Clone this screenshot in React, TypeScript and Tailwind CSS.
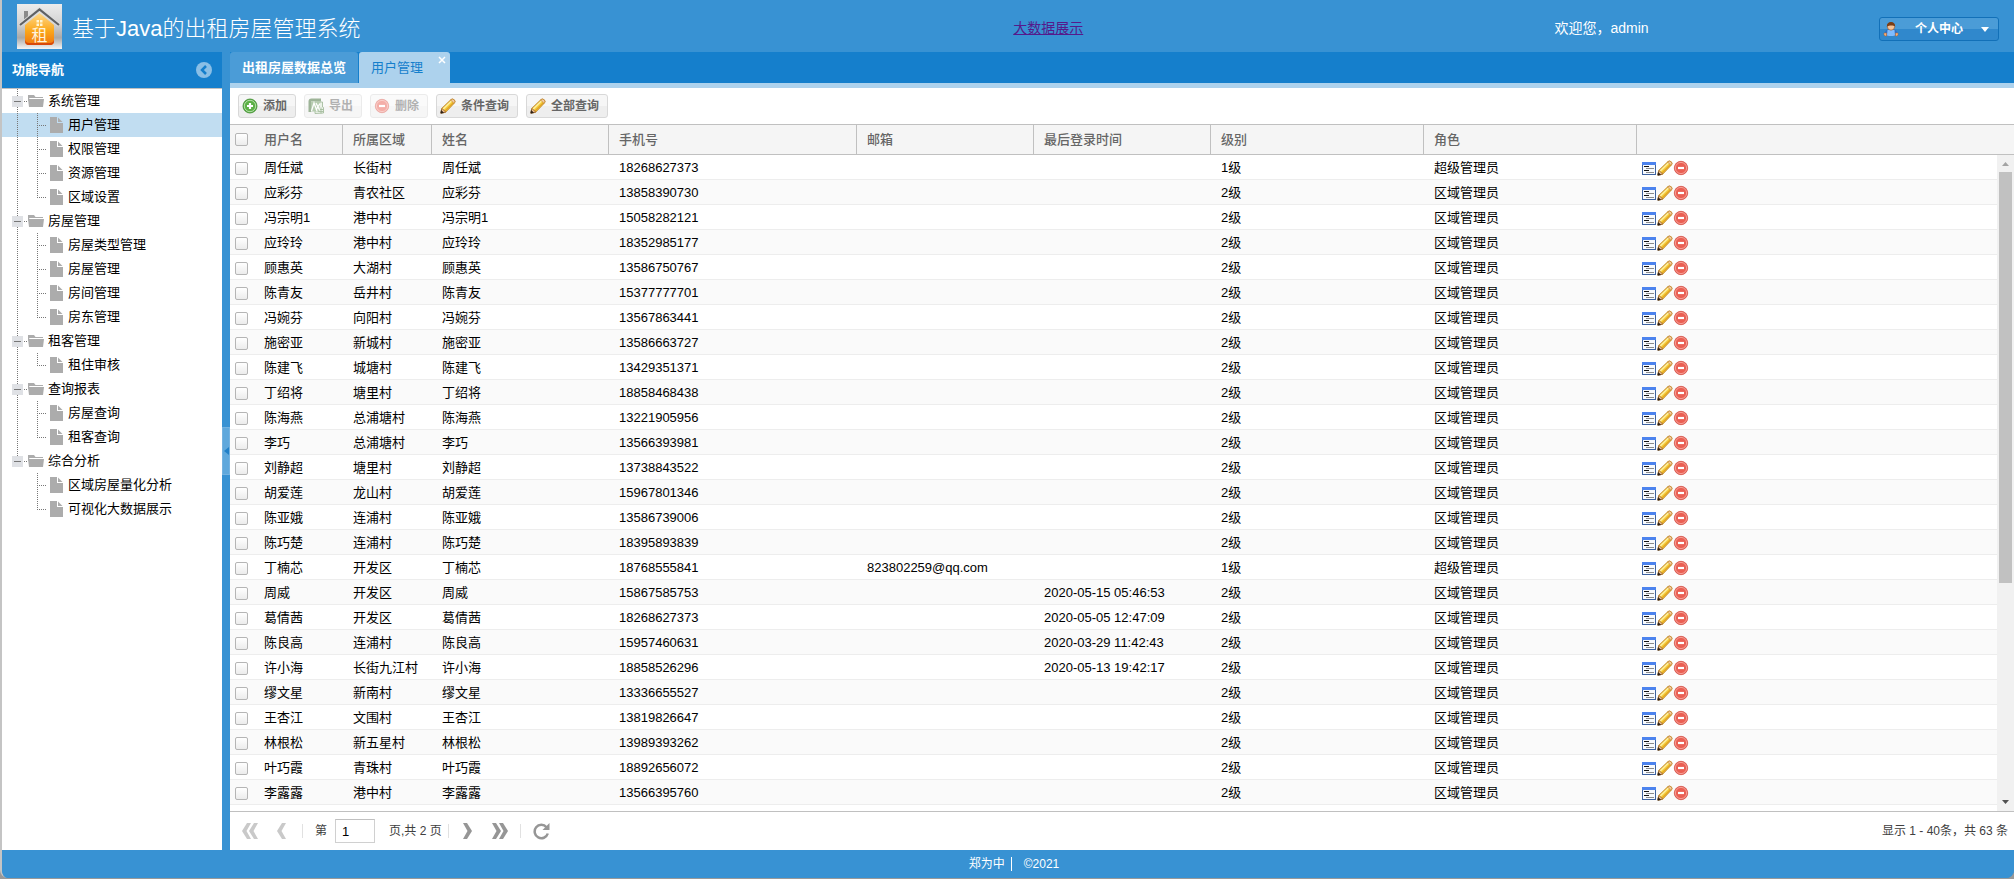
import type { ReactNode } from 'react';

type User = {
  name: string;
  area: string;
  phone: string;
  email?: string;
  lastLogin?: string;
  top?: boolean;
};

const menu = [
  { title: '系统管理', items: ['用户管理', '权限管理', '资源管理', '区域设置'] },
  { title: '房屋管理', items: ['房屋类型管理', '房屋管理', '房间管理', '房东管理'] },
  { title: '租客管理', items: ['租住审核'] },
  { title: '查询报表', items: ['房屋查询', '租客查询'] },
  { title: '综合分析', items: ['区域房屋量化分析', '可视化大数据展示'] },
];

const users: User[] = [
  { name: '周任斌', area: '长街村', phone: '18268627373', top: true },
  { name: '应彩芬', area: '青农社区', phone: '13858390730' },
  { name: '冯宗明1', area: '港中村', phone: '15058282121' },
  { name: '应玲玲', area: '港中村', phone: '18352985177' },
  { name: '顾惠英', area: '大湖村', phone: '13586750767' },
  { name: '陈青友', area: '岳井村', phone: '15377777701' },
  { name: '冯婉芬', area: '向阳村', phone: '13567863441' },
  { name: '施密亚', area: '新城村', phone: '13586663727' },
  { name: '陈建飞', area: '城塘村', phone: '13429351371' },
  { name: '丁绍将', area: '塘里村', phone: '18858468438' },
  { name: '陈海燕', area: '总浦塘村', phone: '13221905956' },
  { name: '李巧', area: '总浦塘村', phone: '13566393981' },
  { name: '刘静超', area: '塘里村', phone: '13738843522' },
  { name: '胡爱莲', area: '龙山村', phone: '15967801346' },
  { name: '陈亚娥', area: '连浦村', phone: '13586739006' },
  { name: '陈巧楚', area: '连浦村', phone: '18395893839' },
  { name: '丁楠芯', area: '开发区', phone: '18768555841', email: '823802259@qq.com', top: true },
  { name: '周威', area: '开发区', phone: '15867585753', lastLogin: '2020-05-15 05:46:53' },
  { name: '葛倩茜', area: '开发区', phone: '18268627373', lastLogin: '2020-05-05 12:47:09' },
  { name: '陈良高', area: '连浦村', phone: '15957460631', lastLogin: '2020-03-29 11:42:43' },
  { name: '许小海', area: '长街九江村', phone: '18858526296', lastLogin: '2020-05-13 19:42:17' },
  { name: '缪文星', area: '新南村', phone: '13336655527' },
  { name: '王杏江', area: '文围村', phone: '13819826647' },
  { name: '林根松', area: '新五星村', phone: '13989393262' },
  { name: '叶巧霞', area: '青珠村', phone: '18892656072' },
  { name: '李露露', area: '港中村', phone: '13566395760' },
];

const columns = [
  { label: '用户名', width: 'w-[89px]' },
  { label: '所属区域', width: 'w-[89px]' },
  { label: '姓名', width: 'w-[177px]' },
  { label: '手机号', width: 'w-[248px]' },
  { label: '邮箱', width: 'w-[177px]' },
  { label: '最后登录时间', width: 'w-[177px]' },
  { label: '级别', width: 'w-[213px]' },
  { label: '角色', width: 'w-[213px]' },
];

/* ---------- icons ---------- */

function LogoIcon() {
  return (
    <svg width="45" height="45" viewBox="0 0 45 45" className="shrink-0" aria-hidden="true">
      <defs>
        <linearGradient id="logoBg" x1="0" y1="0" x2="0" y2="1">
          <stop offset="0" stopColor="#ececec" />
          <stop offset="0.45" stopColor="#d2d2d2" />
          <stop offset="0.75" stopColor="#a9a9a9" />
          <stop offset="1" stopColor="#f4f4f4" />
        </linearGradient>
        <linearGradient id="logoHouse" x1="0" y1="0" x2="0" y2="1">
          <stop offset="0" stopColor="#ffd98a" />
          <stop offset="0.55" stopColor="#fba81c" />
          <stop offset="1" stopColor="#f0760e" />
        </linearGradient>
      </defs>
      <rect width="45" height="45" fill="url(#logoBg)" />
      <path d="M7 7h4v6l-4 4z" fill="#8a8a8a" />
      <path d="M22.500 9L8 21v16q0 4 4 4h21q4 0 4-4V21z" fill="url(#logoHouse)" />
      <path d="M8 37q0 4 4 4h21q4 0 4-4v-1q-1 3-4 3H12q-3 0-4-3z" fill="#d9480a" />
      <path d="M3 21L22.500 5.500 42 21" fill="none" stroke="#ddd" strokeWidth="4" />
      <path d="M3 21L22.500 5.500 42 21" fill="none" stroke="#5f6164" strokeWidth="2.200" />
      <path d="M19.500 16h2.500v2.500h-2.500zM23 16h2.500v2.500H23zM19.500 19.500h2.500V22h-2.500zM23 19.500h2.500V22H23z" fill="#fff6d5" />
      <text x="22.500" y="37" textAnchor="middle" fontSize="16" fill="#fff3dd">
        租
      </text>
    </svg>
  );
}

function UserIcon() {
  return (
    <svg width="16" height="16" viewBox="0 0 16 16" aria-hidden="true">
      <path d="M1.500 13.500c0-3 1.500-5 4-5h5c2.500 0 4 2 4 5l-2 1.500h-9z" fill="#2f6fc4" />
      <path d="M4 14.500l.5-5.500h7l.5 5.500q-4 1-8 0z" fill="#7fbcff" />
      <path d="M1 12h2.500v3H2q-1.500-1-1-3zM15 12h-2.500v3H14q1.500-1 1-3z" fill="#f2b07c" stroke="#b5622b" strokeWidth=".5" />
      <circle cx="8" cy="5.500" r="3.700" fill="#f5c398" stroke="#8a4a22" strokeWidth=".6" />
      <path d="M3.900 5.500C3.700 2.500 5.500 1 8 1s4.300 1.500 4.100 4.500C10.500 3.900 6 4.200 3.900 5.500z" fill="#7a3d14" />
    </svg>
  );
}

function AddIcon() {
  return (
    <svg width="16" height="16" viewBox="0 0 16 16" aria-hidden="true">
      <circle cx="8" cy="8" r="7" fill="#5cb046" stroke="#3b8a2c" strokeWidth=".8" />
      <circle cx="8" cy="8" r="5.700" fill="none" stroke="#b4dfa8" strokeWidth="1" />
      <path d="M8 5v6M5 8h6" stroke="#fff" strokeWidth="2.200" />
    </svg>
  );
}

function MinusIcon() {
  return (
    <svg width="16" height="16" viewBox="0 0 16 16" aria-hidden="true">
      <circle cx="8" cy="8" r="6.700" fill="#ea5f53" stroke="#d4544a" strokeWidth=".8" />
      <circle cx="8" cy="8" r="5.600" fill="none" stroke="#f6a59c" strokeWidth=".9" />
      <path d="M5 8h6" stroke="#fff" strokeWidth="2.200" />
    </svg>
  );
}

function ExportIcon() {
  return (
    <svg width="16" height="16" viewBox="0 0 16 16" aria-hidden="true">
      <path d="M7 4h7.500v5l1 .5v5.500l-8.500.5z" fill="#dbe8d5" stroke="#4f7d42" strokeWidth=".9" />
      <path d="M10 11.500h5.500M10 13.500h5.500M13 9.500v6" stroke="#4f7d42" strokeWidth=".9" />
      <path d="M.5 3.500Q.5.500 3.500.5H13v3H3V14H.5z" fill="#3f6b34" />
      <path d="M3 3.500h9.500l-1.500 10H3z" fill="#6f9a62" />
      <path d="M3.500 13L6 5l3 8M8 5l3.500 7M12 5.500L8 12" stroke="#fff" strokeWidth="1.300" fill="none" />
    </svg>
  );
}

function PencilIcon() {
  return (
    <svg width="16" height="16" viewBox="0 0 16 16" aria-hidden="true">
      <path d="M1 15l.8-4.600L11 1.600q1.700-1.200 3.200.2t.2 3.200L5.600 14.200z" fill="#f7cf3f" stroke="#b87a1c" strokeWidth=".9" />
      <path d="M3 11.200l8.700-8.500" stroke="#fdf0a6" strokeWidth="1.300" />
      <path d="M4.900 13.200l8.700-8.800" stroke="#e3a424" strokeWidth="1.200" />
      <path d="M10.600 2L14 5.400l.7-.9Q15.500 3 14.200 1.800t-2.900-.4z" fill="#f3c9a0" stroke="#b87a1c" strokeWidth=".6" />
      <path d="M.8 15.200l.9-4.500 1.500.6.6 1.200 1.300.6.4 1.200z" fill="#eec193" stroke="#8a5218" strokeWidth=".6" />
      <path d="M.8 15.200l.5-2.700 2.300 2.200z" fill="#2c2018" stroke="#2c2018" strokeWidth=".6" />
    </svg>
  );
}

function FormIcon() {
  return (
    <svg width="16" height="16" viewBox="0 0 16 16" shapeRendering="crispEdges" aria-hidden="true">
      <path d="M1 2h14v13H1z" fill="#3d62a0" />
      <path d="M1 2h14v3H1z" fill="#4c83ee" />
      <path d="M2 5h12v9H2z" fill="#f7fafe" />
      <path d="M3 6h5v1H3zM3 10h5v1H3z" fill="#111" />
      <path d="M5 8h8v1H5zM5 12h8v1H5z" fill="#8b8b8b" />
    </svg>
  );
}

function FolderIcon() {
  return (
    <svg width="16" height="16" viewBox="0 0 16 16" className="ml-px shrink-0" aria-hidden="true">
      <path d="M0 2h6l1.500 2H15v1H1.500L0 8zM0 6h16l-1 8H1z" fill="#acacac" />
    </svg>
  );
}

function FileIcon() {
  return (
    <svg width="16" height="16" viewBox="0 0 16 16" className="ml-px shrink-0" aria-hidden="true">
      <path d="M2 0h7v6h6v10H2z" fill="#acacac" />
      <path d="M10 .5L14.500 5H10z" fill="#acacac" />
    </svg>
  );
}

const dots = { stroke: '#777', strokeDasharray: '1 1', shapeRendering: 'crispEdges' } as const;

function Trunk({ node, last }: { node?: boolean; last?: boolean }) {
  return (
    <svg width="20" height="24" viewBox="0 0 20 24" className="shrink-0" aria-hidden="true">
      {(node || !last) && <path d={last ? 'M10.500 0v12' : 'M10.500 0v24'} {...dots} />}
      {node && (
        <>
          <path d="M17 12.500h3" {...dots} />
          <rect x="5" y="7" width="11" height="11" fill="#dfe1e5" />
          <path d="M7 12.500h7" stroke="#777" shapeRendering="crispEdges" />
        </>
      )}
    </svg>
  );
}

function Elbow({ last }: { last: boolean }) {
  return (
    <svg width="20" height="24" viewBox="0 0 20 24" className="shrink-0" aria-hidden="true">
      <path d={last ? 'M10.500 0v13' : 'M10.500 0v24'} {...dots} />
      <path d="M10 12.500h9" {...dots} />
    </svg>
  );
}

function Chevrons({ d, width, faded }: { d: string; width: number; faded?: boolean }) {
  return (
    <svg width={width} height="16" viewBox={`0 0 ${width} 16`} aria-hidden="true">
      <path d={d} fill={faded ? '#c9c9c9' : '#969696'} />
    </svg>
  );
}

/* ---------- pieces ---------- */

function ToolButton({ icon, children, disabled }: { icon: ReactNode; children: ReactNode; disabled?: boolean }) {
  return (
    <button
      type="button"
      disabled={disabled}
      className="flex h-6 items-center gap-[5px] rounded-[3px] border border-[#d8d8d8] bg-linear-to-b from-[#f6f6f6] from-50% to-[#eeeeee] to-50% pr-2 pl-[3px] text-xs font-bold text-[#666] disabled:opacity-50"
    >
      {icon}
      {children}
    </button>
  );
}

function Check({ label }: { label: string }) {
  return (
    <input
      type="checkbox"
      aria-label={label}
      className="ml-[5px] block size-[13px] appearance-none rounded-[2px] border border-[#b5b5b5] bg-linear-to-b from-white to-[#ececec]"
    />
  );
}

function TopBar() {
  return (
    <header className="flex h-[52px] shrink-0 items-center bg-[#3892d3] text-sm text-white">
      <div className="flex w-[38%] items-center gap-[10px] pl-[15px]">
        <LogoIcon />
        <h1 className="pt-1 text-[22px] font-light leading-[45px] whitespace-nowrap">基于Java的出租房屋管理系统</h1>
      </div>
      <div className="w-[28%] pt-1 text-center">
        <a href="#" className="text-[#551a8b] underline">大数据展示</a>
      </div>
      <div className="w-[27%] pt-1 text-center">欢迎您，admin</div>
      <button
        type="button"
        className="mt-1.5 mr-[15px] ml-auto flex h-6 w-[120px] items-center rounded-[3px] border border-[#1270b8] bg-linear-to-b from-[#4b9cd7] from-50% to-[#3088cc] to-50% px-[3px] text-xs font-bold"
      >
        <UserIcon />
        <span className="flex-1 text-center">个人中心</span>
        <svg width="16" height="16" viewBox="0 0 16 16" aria-hidden="true">
          <path d="M2 6h8l-4 5z" fill="#fff" />
        </svg>
      </button>
    </header>
  );
}

function SideNav() {
  return (
    <aside className="flex w-[220px] shrink-0 flex-col bg-white">
      <div className="flex h-9 items-center justify-between bg-[#157fcc] px-[10px] text-[13px] font-bold text-white">
        功能导航
        <button type="button" aria-label="折叠">
          <svg width="16" height="16" viewBox="0 0 16 16" aria-hidden="true">
            <circle cx="8" cy="8" r="8" fill="#8abfe6" />
            <path d="M10 4L6 8l4 4" fill="none" stroke="#157fcc" strokeWidth="2.500" />
          </svg>
        </button>
      </div>
      <nav className="border-t border-[#c0c0c0] text-[13px] leading-6 text-black">
        <ul>
          {menu.map((group, g) => {
            const lastGroup = g === menu.length - 1;
            return (
              <li key={group.title}>
                <button type="button" className="flex w-full items-center pl-[5px]">
                  <Trunk node last={lastGroup} />
                  <FolderIcon />
                  <span className="ml-1">{group.title}</span>
                </button>
                <ul>
                  {group.items.map((item, i) => (
                    <li key={item}>
                      <a href="#" className={`flex items-center pl-[5px] ${g === 0 && i === 0 ? 'bg-[#c1ddf1]' : ''}`}>
                        <Trunk last={lastGroup} />
                        <Elbow last={i === group.items.length - 1} />
                        <FileIcon />
                        <span className="ml-1">{item}</span>
                      </a>
                    </li>
                  ))}
                </ul>
              </li>
            );
          })}
        </ul>
      </nav>
    </aside>
  );
}

function Splitter() {
  return (
    <div className="flex w-2 shrink-0 items-center bg-[#3892d3]">
      <button type="button" aria-label="收起导航" className="flex h-12 w-2 items-center justify-center border border-[#74b2e0] bg-[#5fa8dc]">
        <svg width="5" height="8" viewBox="0 0 5 8" aria-hidden="true">
          <path d="M5 0v8L0 4z" fill="#2180c8" />
        </svg>
      </button>
    </div>
  );
}

function TabBar() {
  return (
    <div className="flex h-9 shrink-0 gap-px border-b-[5px] border-[#add2ed] bg-[#157fcc] text-[13px]">
      <button type="button" className="rounded-t-[3px] bg-[#4b9cd7] px-3 font-bold text-white">出租房屋数据总览</button>
      <div className="flex items-start rounded-t-[3px] bg-[#add2ed] pr-1 pl-3">
        <button type="button" className="h-full pr-[15px] text-[#157fcc]">用户管理</button>
        <button type="button" aria-label="关闭" className="mt-1">
          <svg width="8" height="8" viewBox="0 0 8 8" aria-hidden="true">
            <path d="M1 1l6 6M7 1L1 7" stroke="#fff" strokeWidth="1.500" />
          </svg>
        </button>
      </div>
    </div>
  );
}

function UserGrid() {
  return (
    <div className="flex min-h-0 flex-1">
      <div className="min-w-0 flex-1 overflow-hidden">
        <table className="w-full table-fixed border-separate border-spacing-0 text-[13px] leading-4 text-black">
          <thead>
            <tr className="text-left text-[#666] *:h-[31px] *:border-y *:border-[#c0c0c0] *:bg-[#f5f5f5] *:p-0 *:font-medium">
              <th className="w-6"><Check label="全选" /></th>
              {columns.map((c) => (
                <th key={c.label} className={c.width}>
                  <div className="flex h-[29px] items-center border-r border-[#c0c0c0] pl-[10px]">{c.label}</div>
                </th>
              ))}
              <th aria-label="操作" />
            </tr>
          </thead>
          <tbody>
            {users.map((u, i) => (
              <tr
                key={i}
                className="odd:bg-white even:bg-[#fafafa] *:h-[25px] *:border-b *:border-[#ededed] *:pt-0.5 *:pr-0 *:pb-0 *:pl-[10px]"
              >
                <td className="pl-0!"><Check label={`选择 ${u.name}`} /></td>
                <td>{u.name}</td>
                <td>{u.area}</td>
                <td>{u.name}</td>
                <td>{u.phone}</td>
                <td>{u.email}</td>
                <td>{u.lastLogin}</td>
                <td>{u.top ? '1级' : '2级'}</td>
                <td>{u.top ? '超级管理员' : '区域管理员'}</td>
                <td className="pl-1!">
                  <div className="flex">
                    <button type="button" aria-label="查看"><FormIcon /></button>
                    <button type="button" aria-label="编辑"><PencilIcon /></button>
                    <button type="button" aria-label="删除"><MinusIcon /></button>
                  </div>
                </td>
              </tr>
            ))}
          </tbody>
        </table>
      </div>

      <div className="flex w-[17px] shrink-0 flex-col">
        <div className="h-[31px] border-y border-[#c0c0c0] bg-[#f5f5f5]" />
        <div className="flex min-h-0 flex-1 flex-col items-center justify-between bg-[#f1f1f1]">
          <svg width="17" height="17" viewBox="0 0 17 17" className="shrink-0" aria-hidden="true">
            <path d="M5 11h7L8.500 7z" fill="#a3a3a3" />
          </svg>
          <div className="min-h-0 w-[13px] flex-1">
            <div className="h-[66%] bg-[#c1c1c1]" />
          </div>
          <svg width="17" height="17" viewBox="0 0 17 17" className="shrink-0" aria-hidden="true">
            <path d="M5 6h7l-3.500 4z" fill="#505050" />
          </svg>
        </div>
      </div>
    </div>
  );
}

function Pager() {
  return (
    <div className="flex h-[39px] shrink-0 items-center border-t border-[#c0c0c0] bg-white pr-[6px] pl-3 text-xs text-[#404040]">
      <button type="button" disabled aria-label="首页">
        <Chevrons faded width={16} d="M5 0h4L4.500 8 9 16H5L0 8zM12 0h4l-4.500 8 4.500 8h-4L7 8z" />
      </button>
      <button type="button" disabled aria-label="上一页" className="ml-[19px]">
        <Chevrons faded width={9} d="M5 0h4L4.500 8 9 16H5L0 8z" />
      </button>
      <span className="mr-3 ml-4 h-[14px] w-px bg-[#e1e1e1]" />
      <label htmlFor="page">第</label>
      <input
        id="page"
        type="text"
        defaultValue="1"
        className="mr-[14px] ml-2 h-6 w-10 border border-[#d0d0d0] border-t-[#c0c0c0] px-[6px] text-[13px] text-black"
      />
      <span>页,共 2 页</span>
      <span className="mr-[14px] ml-[6px] h-[14px] w-px bg-[#e1e1e1]" />
      <button type="button" aria-label="下一页">
        <Chevrons width={9} d="M0 0h4l5 8-5 8H0l4.500-8z" />
      </button>
      <button type="button" aria-label="末页" className="ml-5">
        <Chevrons width={16} d="M0 0h4l5 8-5 8H0l4.500-8zM7 0h4l5 8-5 8H7l4.500-8z" />
      </button>
      <span className="mr-3 ml-3 h-[14px] w-px bg-[#e1e1e1]" />
      <button type="button" aria-label="刷新">
        <svg width="17" height="17" viewBox="0 0 17 17" aria-hidden="true">
          <path d="M13.500 4.200A6.700 6.700 0 1 0 14.800 10.500" fill="none" stroke="#969696" strokeWidth="2.500" />
          <path d="M16.500 0v7h-7z" fill="#969696" />
        </svg>
      </button>
      <span className="ml-auto">显示 1 - 40条，共 63 条</span>
    </div>
  );
}

export default function App() {
  return (
    <div className="h-screen bg-[#999] font-['Liberation_Sans','Noto_Sans_CJK_SC',sans-serif] pb-px" lang="zh-CN">
      <div className="flex h-full flex-col overflow-hidden rounded-b-lg border-l-2 border-[#c4c4c4] bg-[#3892d3]">
        <TopBar />
        <div className="flex min-h-0 flex-1">
          <SideNav />
          <Splitter />
          <main className="flex min-w-0 flex-1 flex-col bg-white">
            <TabBar />
            <div className="flex h-9 shrink-0 items-center gap-2 px-2">
              <ToolButton icon={<AddIcon />}>添加</ToolButton>
              <ToolButton icon={<ExportIcon />} disabled>导出</ToolButton>
              <ToolButton icon={<MinusIcon />} disabled>删除</ToolButton>
              <ToolButton icon={<PencilIcon />}>条件查询</ToolButton>
              <ToolButton icon={<PencilIcon />}>全部查询</ToolButton>
            </div>
            <UserGrid />
            <Pager />
          </main>
        </div>
        <footer className="flex h-7 shrink-0 items-center justify-center bg-[#3892d3] pl-3 text-xs text-white">
          <span>郑为中</span>
          <span className="mr-3 ml-1.5 h-[14px] w-px bg-white" />
          <span>©2021</span>
        </footer>
      </div>
    </div>
  );
}
